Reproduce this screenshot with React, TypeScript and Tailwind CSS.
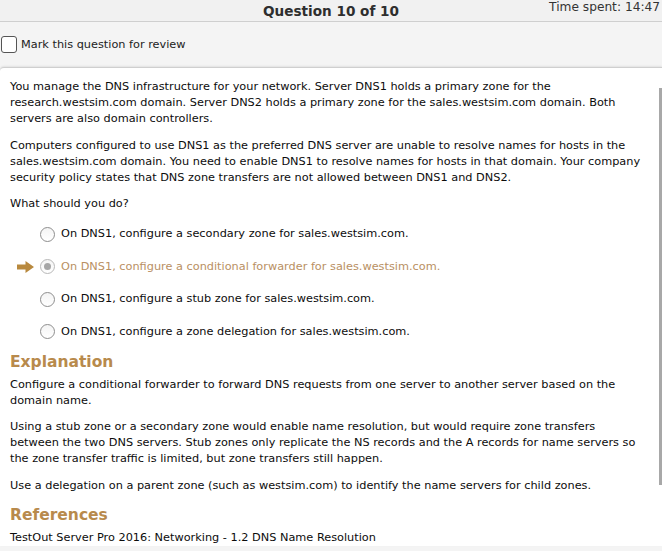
import React from "react";

const font = { fontFamily: '"DejaVu Sans", Verdana, sans-serif' };

function Radio({ checked }: { checked?: boolean }) {
  return (
    <span
      className={
        "flex h-[15px] w-[15px] shrink-0 items-center justify-center rounded-full border bg-gradient-to-b from-[#f4f4f4] to-white " +
        (checked ? "border-[#b8b8b8]" : "border-[#8e8e8e]")
      }
    >
      {checked && <span className="h-[7px] w-[7px] rounded-full bg-[#a6a6a6]" />}
    </span>
  );
}

function Option({ text, selected }: { text: string; selected?: boolean }) {
  return (
    <div className="flex h-[32.5px] items-center">
      <div className="flex w-[40px] shrink-0 justify-end pr-[6px]">
        {selected && (
          <svg width="17" height="12" viewBox="0 0 17 12">
            <path d="M0 3.5 H8.5 V0 L17 6 L8.5 12 V8.5 H0 Z" fill="#b8893e" />
          </svg>
        )}
      </div>
      <Radio checked={selected} />
      <span className={"ml-[6px] " + (selected ? "text-[#b99063]" : "text-[#0c0c0c]")}>{text}</span>
    </div>
  );
}

export default function App() {
  return (
    <div
      className="flex h-[551px] w-[662px] flex-col overflow-hidden whitespace-nowrap bg-[#f4f4f4] text-[11.3px] leading-[16px] text-[#0c0c0c]"
      style={font}
    >
      {/* top bar */}
      <div className="relative flex h-[22px] shrink-0 items-center justify-center border-b border-[#cfcfcf] bg-[#f1f1f1]">
        <span className="text-[13.6px] font-bold text-[#2e2e2e]">Question 10 of 10</span>
        <span className="absolute right-[2px] top-[-1px] text-[12.2px] text-[#333]">Time spent: 14:47</span>
      </div>
      {/* review bar */}
      <div className="flex h-[45px] shrink-0 items-center pl-[1px]">
        <span className="h-[17px] w-[16px] rounded-[3px] border border-[#555] bg-white" />
        <span className="ml-[4px] text-[#222]">Mark this question for review</span>
      </div>
      {/* content */}
      <div className="relative flex-1 rounded-tl-[4px] border-t border-[#cfcfcf] bg-white px-[10px] pt-[11px] shadow-[0_-1px_2px_rgba(0,0,0,0.08)]">
        <div className="absolute right-0 top-[20px] h-[397px] w-[3px] bg-[#a8a8a8]" />
        <p>
          You manage the DNS infrastructure for your network. Server DNS1 holds a primary zone for the
          <br />
          research.westsim.com domain. Server DNS2 holds a primary zone for the sales.westsim.com domain. Both
          <br />
          servers are also domain controllers.
        </p>
        <p className="mt-[11px]">
          Computers configured to use DNS1 as the preferred DNS server are unable to resolve names for hosts in the
          <br />
          sales.westsim.com domain. You need to enable DNS1 to resolve names for hosts in that domain. Your company
          <br />
          security policy states that DNS zone transfers are not allowed between DNS1 and DNS2.
        </p>
        <p className="mt-[10px]">What should you do?</p>
        <div className="ml-[-10px] mt-[6px]">
          <Option text="On DNS1, configure a secondary zone for sales.westsim.com." />
          <Option text="On DNS1, configure a conditional forwarder for sales.westsim.com." selected />
          <Option text="On DNS1, configure a stub zone for sales.westsim.com." />
          <Option text="On DNS1, configure a zone delegation for sales.westsim.com." />
        </div>
        <h2 className="mt-[3px] text-[15.5px] font-bold leading-[22px] text-[#b88a4c]">Explanation</h2>
        <p className="mt-[4px]">
          Configure a conditional forwarder to forward DNS requests from one server to another server based on the
          <br />
          domain name.
        </p>
        <p className="mt-[10px]">
          Using a stub zone or a secondary zone would enable name resolution, but would require zone transfers
          <br />
          between the two DNS servers. Stub zones only replicate the NS records and the A records for name servers so
          <br />
          the zone transfer traffic is limited, but zone transfers still happen.
        </p>
        <p className="mt-[11px]">Use a delegation on a parent zone (such as westsim.com) to identify the name servers for child zones.</p>
        <h2 className="mt-[10px] text-[15.5px] font-bold leading-[22px] text-[#b88a4c]">References</h2>
        <p className="mt-[4px]">TestOut Server Pro 2016: Networking - 1.2 DNS Name Resolution</p>
      </div>
      <div className="h-[6px] shrink-0 bg-[#f4f4f4]" />
    </div>
  );
}
